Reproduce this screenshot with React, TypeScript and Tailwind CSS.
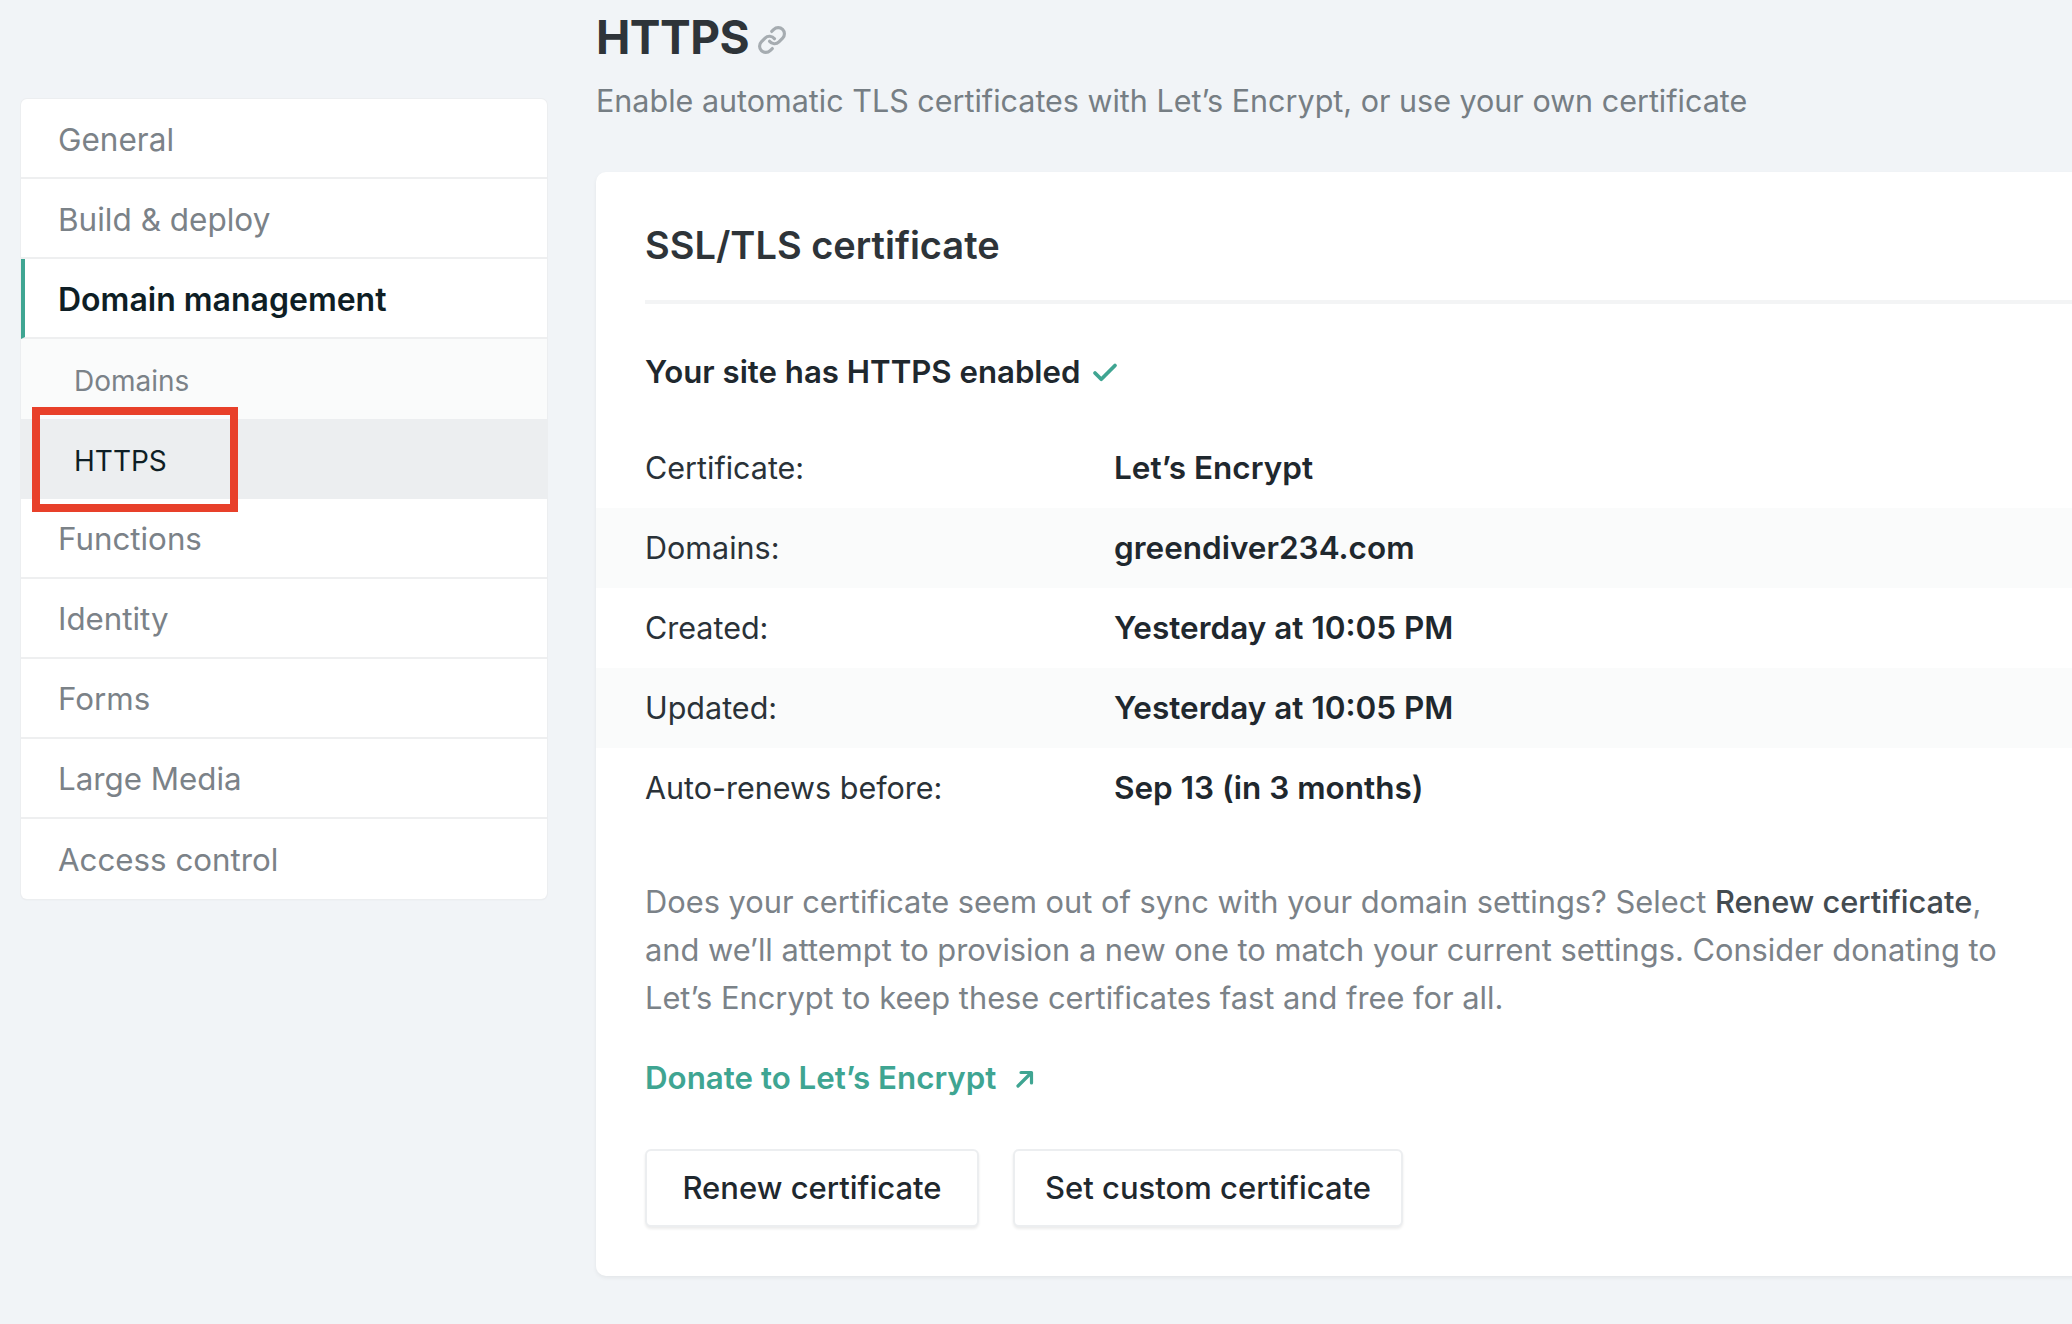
import { Link, Check } from 'lucide-react';

const navTop = ['General', 'Build & deploy'];
const navBottom = ['Functions', 'Identity', 'Forms', 'Large Media', 'Access control'];

const rows: { label: string; value: string }[] = [
  { label: 'Certificate:', value: 'Let’s Encrypt' },
  { label: 'Domains:', value: 'greendiver234.com' },
  { label: 'Created:', value: 'Yesterday at 10:05 PM' },
  { label: 'Updated:', value: 'Yesterday at 10:05 PM' },
  { label: 'Auto-renews before:', value: 'Sep 13 (in 3 months)' },
];

function Sidebar() {
  return (
    <aside className="mt-[99px] ml-[21px] w-[526px] shrink-0 self-start overflow-hidden rounded-[6px] bg-white shadow-[0_1px_2px_rgba(0,0,0,0.06)] ring-1 ring-[#eceef0]">
      {navTop.map((item) => (
        <div
          key={item}
          className="flex h-[80px] items-center border-b-2 border-[#eeeff0] pl-[37px] pt-[3px] text-[31.5px] text-[#7b8288]"
        >
          {item}
        </div>
      ))}
      <div className="flex h-[80px] items-center border-b-2 border-l-4 border-b-[#eeeff0] border-l-[#3fa592] pl-[33px] pt-[3px] text-[32px] font-semibold text-[#0e1e25]">
        Domain management
      </div>
      <div className="flex h-[80px] items-center bg-[#fafbfb] pl-[53px] pt-[3px] text-[28px] text-[#7b8288]">
        Domains
      </div>
      <div className="relative flex h-[80px] items-center bg-[#eceef0] pl-[53px] pt-[3px] text-[28px] text-[#0e1e25]">
        HTTPS
        <div className="absolute left-[11px] top-[-12px] h-[105px] w-[206px] border-[8px] border-[#e8402a]" />
      </div>
      {navBottom.map((item, i) => (
        <div
          key={item}
          className={`flex h-[80px] items-center pl-[37px] pt-[3px] text-[31.3px] text-[#7b8288] ${
            i < navBottom.length - 1 ? 'border-b-2 border-[#eeeff0]' : ''
          }`}
        >
          {item}
        </div>
      ))}
    </aside>
  );
}

export default function App() {
  return (
    <div
      className="flex h-[1324px] w-[2072px] overflow-hidden bg-[#f1f4f7]"
      style={{ fontFamily: 'Inter, "Noto Sans", sans-serif' }}
    >
      <Sidebar />

      <main className="ml-[49px] min-w-0 flex-1">
        <div className="flex items-center gap-[8px] pt-[8px]">
          <h1 className="text-[46px] font-bold leading-[58px] tracking-[-0.5px] text-[#2e3439]">HTTPS</h1>
          <Link className="mt-[6px] h-[30px] w-[30px] text-[#a6acb1]" strokeWidth={2.5} />
        </div>
        <p className="mt-[15px] text-[30.5px] leading-[40px] text-[#767e84]">
          Enable automatic TLS certificates with Let’s Encrypt, or use your own certificate
        </p>

        <section className="mt-[51px] w-[1560px] rounded-[10px] bg-white pb-[49px] shadow-[0_2px_4px_rgba(0,0,0,0.06)]">
          <div className="px-[49px] pt-[50px]">
            <h2 className="pb-[32px] text-[38px] font-semibold leading-[46px] text-[#2e3439]">
              SSL/TLS certificate
            </h2>
            <div className="h-[4px] bg-[#f3f4f5]" />
          </div>

          <div className="flex items-center gap-[10px] px-[49px] pt-[48px] pb-[36px]">
            <span className="text-[31.2px] font-semibold leading-[40px] text-[#1f282e]">
              Your site has HTTPS enabled
            </span>
            <Check className="mt-[2px] h-[30px] w-[30px] text-[#3fa592]" strokeWidth={3} />
          </div>

          <div>
            {rows.map((r, i) => (
              <div
                key={r.label}
                className={`flex h-[80px] items-center px-[49px] ${i % 2 === 1 ? 'bg-[#fafbfb]' : ''}`}
              >
                <div className="w-[469px] shrink-0 text-[30.5px] text-[#2a3238]">{r.label}</div>
                <div className="text-[31.5px] font-semibold text-[#1f282e]">{r.value}</div>
              </div>
            ))}
          </div>

          <p className="mt-[50px] w-[1460px] px-[49px] text-[30.8px] leading-[48px] text-[#7b8288]">
            Does your certificate seem out of sync with your domain settings? Select{' '}
            <span className="font-medium text-[#434b51]">Renew certificate</span>, and we’ll attempt to
            provision a new one to match your current settings. Consider donating to Let’s Encrypt to
            keep these certificates fast and free for all.
          </p>

          <a className="mt-[36px] flex items-center gap-[18px] px-[49px] text-[31.3px] font-semibold leading-[40px] text-[#3fa592]">
            Donate to Let’s Encrypt
            <svg width="22" height="22" viewBox="0 0 22 22" fill="none" className="mt-[2px]">
              <path d="M4 18 L17 5 M7 4.5 H17.5 V15" stroke="currentColor" strokeWidth="3.2" strokeLinecap="round" strokeLinejoin="round" />
            </svg>
          </a>

          <div className="mt-[51px] flex gap-[34px] px-[49px]">
            <button className="h-[78px] w-[334px] rounded-[6px] border-2 border-[#eceef0] bg-white text-[31px] font-medium text-[#1f282e] shadow-[0_2px_3px_rgba(0,0,0,0.08)]">
              Renew certificate
            </button>
            <button className="h-[78px] w-[390px] rounded-[6px] border-2 border-[#eceef0] bg-white text-[31px] font-medium text-[#1f282e] shadow-[0_2px_3px_rgba(0,0,0,0.08)]">
              Set custom certificate
            </button>
          </div>
        </section>
      </main>
    </div>
  );
}
